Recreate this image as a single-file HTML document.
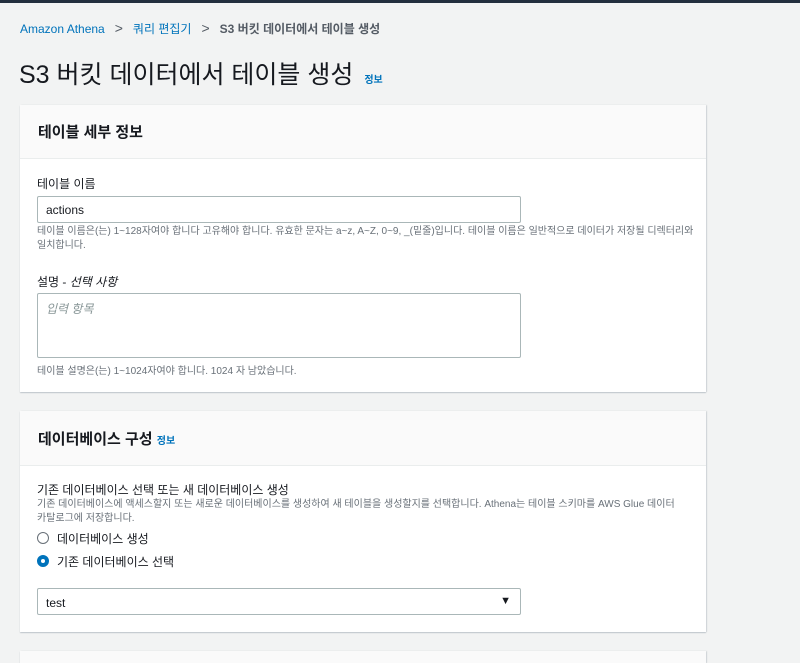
<!DOCTYPE html>
<html><head><meta charset="utf-8"><style>
*{box-sizing:border-box;margin:0;padding:0}
html,body{width:800px;height:663px;overflow:hidden}
body{background:#f2f3f3;font-family:"Liberation Sans","Noto Sans CJK KR",sans-serif;color:#16191f;position:relative}
.a{position:absolute;white-space:nowrap}
.topbar{position:absolute;left:0;top:0;width:800px;height:3px;background:#232f3e}
.panel{position:absolute;left:20px;width:686px;background:#fff;box-shadow:0 1px 1px rgba(0,30,60,.2),1px 0 1px rgba(0,30,60,.12)}
.ph{position:absolute;left:0;top:0;width:100%;background:#fafafa;border-bottom:1px solid #eaeded}
.inp{position:absolute;left:37px;width:484px;border:1px solid #aab7b8;background:#fff;border-radius:2px}
.small{font-size:10px;color:#687078;word-break:keep-all}
.blue{color:#0073bb}
</style></head><body>
<div class="topbar"></div>
<div class="a" style="left:20px;top:20px;font-size:12px;"><span class="blue">Amazon Athena</span><span style="color:#545b64;margin:0 10px;font-size:14px">&gt;</span><span class="blue">쿼리 편집기</span><span style="color:#545b64;margin:0 10px;font-size:14px">&gt;</span><span style="color:#545b64;font-weight:bold">S3 버킷 데이터에서 테이블 생성</span></div>
<div class="a" style="left:19px;top:55px;font-size:25px;color:#16191f">S3 버킷 데이터에서 테이블 생성 <span class="blue" style="font-size:10px;font-weight:bold;margin-left:4px">정보</span></div>

<div class="panel" style="top:105px;height:287px">
  <div class="ph" style="height:54px"></div>
  <div class="a" style="left:18px;top:16px;font-size:15px;font-weight:bold">테이블 세부 정보</div>
  <div class="a" style="left:17px;top:70px;font-size:12px">테이블 이름</div>
  <div class="a small" style="left:17px;top:120px;line-height:14px;white-space:normal;width:660px">테이블 이름은(는) 1~128자여야 합니다 고유해야 합니다. 유효한 문자는 a~z, A~Z, 0~9, _(밑줄)입니다. 테이블 이름은 일반적으로 데이터가 저장될 디렉터리와 일치합니다.</div>
  <div class="a" style="left:17px;top:168px;font-size:12px">설명 - <i>선택 사항</i></div>
  <div class="a small" style="left:17px;top:257px">테이블 설명은(는) 1~1024자여야 합니다. 1024 자 남았습니다.</div>
</div>
<div class="inp" style="top:196px;height:27px"><span class="a" style="left:8px;top:6px;font-size:12px">actions</span></div>
<div class="inp" style="top:293px;height:65px"><span class="a" style="left:8px;top:6px;font-size:12px;color:#879596;font-style:italic">입력 항목</span></div>

<div class="panel" style="top:411px;height:221px">
  <div class="ph" style="height:55px"></div>
  <div class="a" style="left:18px;top:17px;font-size:15px;font-weight:bold">데이터베이스 구성 <span class="blue" style="font-size:10px">정보</span></div>
  <div class="a" style="left:17px;top:70px;font-size:12px">기존 데이터베이스 선택 또는 새 데이터베이스 생성</div>
  <div class="a small" style="left:17px;top:87px;line-height:14px;white-space:normal;width:640px">기존 데이터베이스에 액세스할지 또는 새로운 데이터베이스를 생성하여 새 테이블을 생성할지를 선택합니다. Athena는 테이블 스키마를 AWS Glue 데이터 카탈로그에 저장합니다.</div>
  <div class="a" style="left:17px;top:121px;width:12px;height:12px;border:1px solid #687078;border-radius:50%"></div>
  <div class="a" style="left:37px;top:119px;font-size:12px">데이터베이스 생성</div>
  <div class="a" style="left:17px;top:144px;width:12px;height:12px;border:4px solid #0073bb;border-radius:50%"></div>
  <div class="a" style="left:37px;top:142px;font-size:12px">기존 데이터베이스 선택</div>
</div>
<div class="inp" style="top:588px;height:27px"><span class="a" style="left:8px;top:7px;font-size:12px">test</span><span class="a" style="right:9px;top:6px;font-size:11px;color:#16191f">▼</span></div>

<div class="panel" style="top:651px;height:12px;background:#fafafa"></div>
</body></html>
